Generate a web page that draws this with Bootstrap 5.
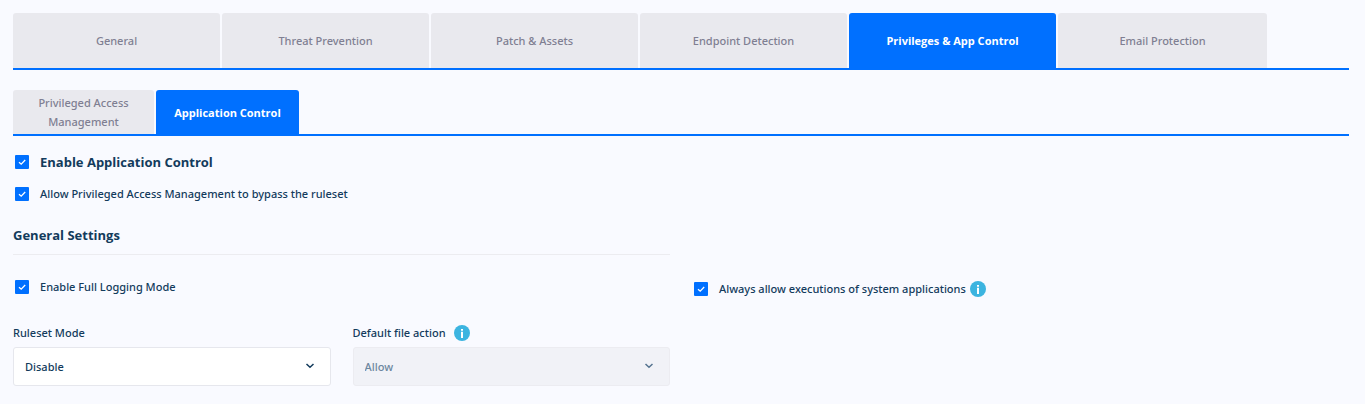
<!DOCTYPE html>
<html lang="en">
<head>
<meta charset="utf-8">
<meta name="viewport" content="width=device-width, initial-scale=1">
<title>Application Control</title>
<link href="https://cdn.jsdelivr.net/npm/bootstrap@5.3.0/dist/css/bootstrap.min.css" rel="stylesheet">
<style>
  body { background: #f9faff; color: #133b5c; font: 500 11px/18px "Noto Sans", "Open Sans", sans-serif; }
  .page { padding: 13px 16px 16px 13px; }
  .tabs { border-bottom: 2px solid #0070ff; gap: 2px; }
  .tabs .nav-item { flex: 0 1 207px; display: flex; }
  .tabs .nav-item:last-child { flex-basis: 209px; }
  .tabs .nav-link { width: 100%; min-height: 55px; padding: 0 16px; line-height: 19px; background: #e9e9ee; color: #7f7f92; border-radius: 3px 3px 0 0; }
  .tabs .nav-link.active { background: #0070ff; color: #fff; font-family: "Open Sans", sans-serif; font-weight: 700; }
  .subtabs { margin-top: 20px; }
  .subtabs .nav-item { flex-basis: 141px; }
  .subtabs .nav-item:last-child { flex-basis: 143px; }
  .subtabs .nav-link { min-height: 44px; }
  .check-row { display: flex; align-items: center; gap: 11px; min-height: 18px; padding-left: 2px; }
  .check-row .form-check-input { flex: none; width: 14px; height: 14px; margin: 0; border: 0; border-radius: 1px; background-color: #0070ff; background-size: 14px; }
  .check-row .form-check-input:checked { background-image: url("data:image/svg+xml,%3Csvg xmlns='http://www.w3.org/2000/svg' viewBox='0 0 14 14'%3E%3Cpath d='M4 7.2 6.2 9.2 10.2 5' fill='none' stroke='white' stroke-width='1.3'/%3E%3C/svg%3E"); }
  .heading { font-family: "Open Sans", sans-serif; font-size: 13px; line-height: 18px; font-weight: 700; }
  .mt-first { margin-top: 17px; }
  .mt-bypass { margin-top: 14px; }
  .general { border-bottom: 1px solid #ececf0; padding-bottom: 10px; margin: 23px 0; }
  .right-col { padding-top: 77px; }
  .settings { display: grid; grid-template-columns: 1fr 1fr; column-gap: 22px; }
  .fields { display: grid; grid-template-columns: 1fr 1fr; column-gap: 22px; margin-top: 28px; }
  .info { width: 16px; height: 16px; flex: none; }
  .with-info { display: flex; align-items: center; gap: 4px; }
  .field-label { display: flex; align-items: center; height: 18px; gap: 8px; margin-bottom: 5px; }
  .fields .form-select { height: 39px; padding: 0 36px 0 11px; font-size: 11px; font-weight: 500; line-height: 18px; color: #133b5c; background-color: #fff; border: 1px solid #e6e7ed; border-radius: 3px; background-position: right 14px center; background-size: 12px;
    background-image: url("data:image/svg+xml,%3Csvg xmlns='http://www.w3.org/2000/svg' viewBox='0 0 12 12'%3E%3Cpath d='M2.5 3 6 6.3 9.5 3' fill='none' stroke='%23133b5c' stroke-width='1.5'/%3E%3C/svg%3E"); }
  .fields .form-select:disabled { color: #6c87a0; background-color: #f1f2f7; border-color: #ececf1; opacity: 1;
    background-image: url("data:image/svg+xml,%3Csvg xmlns='http://www.w3.org/2000/svg' viewBox='0 0 12 12'%3E%3Cpath d='M2.5 3 6 6.3 9.5 3' fill='none' stroke='%23567490' stroke-width='1.5'/%3E%3C/svg%3E"); }
</style>
</head>
<body>
<main class="container-fluid page">
  <ul class="nav flex-nowrap tabs">
    <li class="nav-item"><a class="nav-link d-flex align-items-center justify-content-center text-center" href="#">General</a></li>
    <li class="nav-item"><a class="nav-link d-flex align-items-center justify-content-center text-center" href="#">Threat Prevention</a></li>
    <li class="nav-item"><a class="nav-link d-flex align-items-center justify-content-center text-center" href="#">Patch &amp; Assets</a></li>
    <li class="nav-item"><a class="nav-link d-flex align-items-center justify-content-center text-center" href="#">Endpoint Detection</a></li>
    <li class="nav-item"><a class="nav-link active d-flex align-items-center justify-content-center text-center" aria-current="page" href="#">Privileges &amp; App Control</a></li>
    <li class="nav-item"><a class="nav-link d-flex align-items-center justify-content-center text-center" href="#">Email Protection</a></li>
  </ul>
  <ul class="nav flex-nowrap tabs subtabs">
    <li class="nav-item"><a class="nav-link d-flex align-items-center justify-content-center text-center" href="#">Privileged Access Management</a></li>
    <li class="nav-item"><a class="nav-link active d-flex align-items-center justify-content-center text-center" aria-current="page" href="#">Application Control</a></li>
  </ul>

  <div class="check-row mt-first">
    <input class="form-check-input" type="checkbox" id="enable" checked>
    <label class="heading" for="enable">Enable Application Control</label>
  </div>
  <div class="check-row mt-bypass">
    <input class="form-check-input" type="checkbox" id="bypass" checked>
    <label for="bypass">Allow Privileged Access Management to bypass the ruleset</label>
  </div>

  <div class="settings">
    <section>
      <h2 class="heading general">General Settings</h2>
      <div class="check-row">
        <input class="form-check-input" type="checkbox" id="logging" checked>
        <label for="logging">Enable Full Logging Mode</label>
      </div>
      <div class="fields">
        <div>
          <div class="field-label"><label for="mode">Ruleset Mode</label></div>
          <select class="form-select" id="mode"><option>Disable</option></select>
        </div>
        <div>
          <div class="field-label"><label for="action">Default file action</label>
            <svg class="info" viewBox="0 0 16 16" aria-hidden="true"><circle cx="8" cy="8" r="8" fill="#3cb4e0"/><path d="M7 4h2v1.7H7zM7 6.7h2V13H7z" fill="#fff"/></svg>
          </div>
          <select class="form-select" id="action" disabled><option>Allow</option></select>
        </div>
      </div>
    </section>
    <section class="right-col">
      <div class="check-row">
        <input class="form-check-input" type="checkbox" id="system" checked>
        <div class="with-info">
          <label for="system">Always allow executions of system applications</label>
          <svg class="info" viewBox="0 0 16 16" aria-hidden="true"><circle cx="8" cy="8" r="8" fill="#3cb4e0"/><path d="M7 4h2v1.7H7zM7 6.7h2V13H7z" fill="#fff"/></svg>
        </div>
      </div>
    </section>
  </div>
</main>
<script src="https://cdn.jsdelivr.net/npm/bootstrap@5.3.0/dist/js/bootstrap.bundle.min.js"></script>
</body>
</html>
